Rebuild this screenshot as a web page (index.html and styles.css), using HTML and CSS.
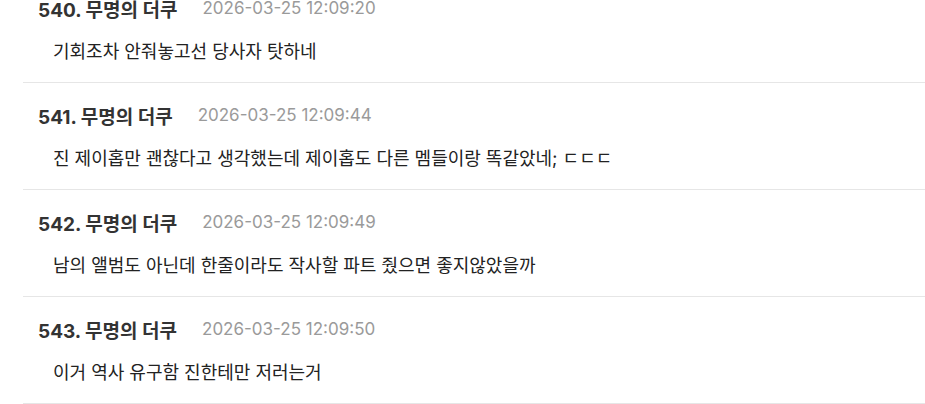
FILE: index.html
```html
<!DOCTYPE html>
<html lang="ko">
<head>
  <meta charset="UTF-8">
  <title>댓글</title>
  <link rel="stylesheet" href="styles.css">
</head>
<body>
  <div class="comments">
    <div class="comment">
      <div class="meta"><span class="name">540. 무명의 더쿠</span><span class="date">2026-03-25 12:09:20</span></div>
      <div class="text">기회조차 안줘놓고선 당사자 탓하네</div>
    </div>
    <div class="comment">
      <div class="meta"><span class="name">541. 무명의 더쿠</span><span class="date">2026-03-25 12:09:44</span></div>
      <div class="text">진 제이홉만 괜찮다고 생각했는데 제이홉도 다른 멤들이랑 똑같았네; ㄷㄷㄷ</div>
    </div>
    <div class="comment">
      <div class="meta"><span class="name">542. 무명의 더쿠</span><span class="date">2026-03-25 12:09:49</span></div>
      <div class="text">남의 앨범도 아닌데 한줄이라도 작사할 파트 줬으면 좋지않았을까</div>
    </div>
    <div class="comment">
      <div class="meta"><span class="name">543. 무명의 더쿠</span><span class="date">2026-03-25 12:09:50</span></div>
      <div class="text">이거 역사 유구함 진한테만 저러는거</div>
    </div>
  </div>
</body>
</html>
```

FILE: styles.css
```css
body {
  margin: 0;
  background-color: #fff;
  font-family: Inter, "Noto Sans CJK KR", sans-serif;
  overflow: hidden;
}
.comments {
  margin-top: -24px;
  padding-left: 23px;
}
.comment {
  padding: 20px 0 18px 15px;
  border-bottom: 1px solid #e6e6e6;
}
.meta {
  display: flex;
  align-items: center;
  gap: 25px;
  height: 24px;
}
.name {
  font-size: 19px;
  font-weight: bold;
  color: #333;
}
.date {
  font-size: 17px;
  color: #9a9a9a;
}
.text {
  margin-top: 20px;
  padding-left: 15px;
  height: 24px;
  line-height: 24px;
  font-size: 18px;
  color: #222;
}
```
